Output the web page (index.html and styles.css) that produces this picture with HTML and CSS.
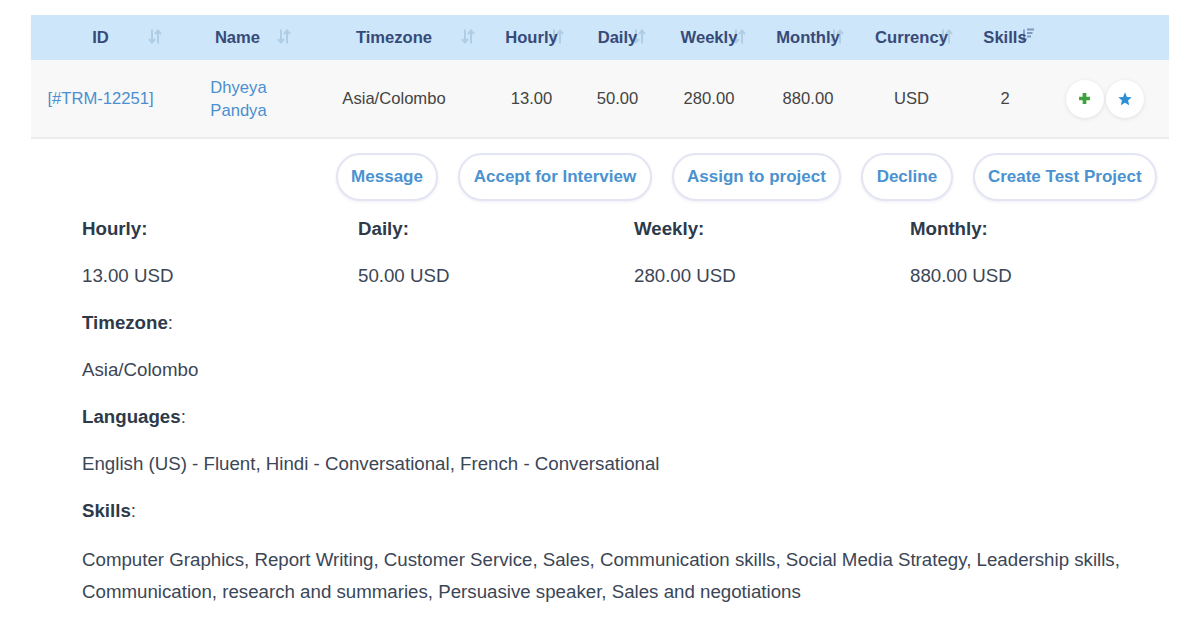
FILE: index.html
```html
<!DOCTYPE html>
<html lang="en">
<head>
    <meta charset="UTF-8">
    <title>Candidates</title>
    <link rel="stylesheet" href="styles.css">
</head>
<body>
    <div class="container">
        <table class="candidates">
            <colgroup>
                <col class="col-id">
                <col class="col-name">
                <col class="col-tz">
                <col class="col-hourly">
                <col class="col-daily">
                <col class="col-weekly">
                <col class="col-monthly">
                <col class="col-currency">
                <col class="col-skills">
                <col class="col-actions">
            </colgroup>
            <thead>
                <tr>
                    <th><span class="th-text">ID</span><svg class="sort" viewBox="0 0 14 16"><path d="M4 1v13M1 10.5l3 3.5 3-3.5M10 15V2M7 5.5l3-3.5 3 3.5"/></svg></th>
                    <th><span class="th-text">Name</span><svg class="sort" viewBox="0 0 14 16"><path d="M4 1v13M1 10.5l3 3.5 3-3.5M10 15V2M7 5.5l3-3.5 3 3.5"/></svg></th>
                    <th><span class="th-text">Timezone</span><svg class="sort" viewBox="0 0 14 16"><path d="M4 1v13M1 10.5l3 3.5 3-3.5M10 15V2M7 5.5l3-3.5 3 3.5"/></svg></th>
                    <th><span class="th-text">Hourly</span><svg class="sort" viewBox="0 0 14 16"><path d="M4 1v13M1 10.5l3 3.5 3-3.5M10 15V2M7 5.5l3-3.5 3 3.5"/></svg></th>
                    <th><span class="th-text">Daily</span><svg class="sort" viewBox="0 0 14 16"><path d="M4 1v13M1 10.5l3 3.5 3-3.5M10 15V2M7 5.5l3-3.5 3 3.5"/></svg></th>
                    <th><span class="th-text">Weekly</span><svg class="sort" viewBox="0 0 14 16"><path d="M4 1v13M1 10.5l3 3.5 3-3.5M10 15V2M7 5.5l3-3.5 3 3.5"/></svg></th>
                    <th><span class="th-text">Monthly</span><svg class="sort" viewBox="0 0 14 16"><path d="M4 1v13M1 10.5l3 3.5 3-3.5M10 15V2M7 5.5l3-3.5 3 3.5"/></svg></th>
                    <th><span class="th-text">Currency</span><svg class="sort" viewBox="0 0 14 16"><path d="M4 1v13M1 10.5l3 3.5 3-3.5M10 15V2M7 5.5l3-3.5 3 3.5"/></svg></th>
                    <th><span class="th-text">Skills</span><svg class="sort sort-active" viewBox="0 0 14 16"><path d="M3 2v12M0.5 11l2.5 3 2.5-3M6 2h7M6 5.5h5.5M6 9h4"/></svg></th>
                    <th></th>
                </tr>
            </thead>
            <tbody>
                <tr>
                    <td><a class="link" href="#">[#TRM-12251]</a></td>
                    <td><a class="link name-link" href="#">Dhyeya Pandya</a></td>
                    <td>Asia/Colombo</td>
                    <td>13.00</td>
                    <td>50.00</td>
                    <td>280.00</td>
                    <td>880.00</td>
                    <td>USD</td>
                    <td>2</td>
                    <td>
                        <div class="row-actions">
                            <button class="circle-btn add-btn" title="Add">
                                <svg viewBox="0 0 12 12"><path d="M6 1v10M1 6h10"/></svg>
                            </button>
                            <button class="circle-btn star-btn" title="Favourite">
                                <svg viewBox="0 0 24 24"><path d="M12 2l2.9 6.9 7.1.6-5.4 4.7 1.7 7.3L12 17.6l-6.3 3.9 1.7-7.3L2 9.5l7.1-.6z"/></svg>
                            </button>
                        </div>
                    </td>
                </tr>
            </tbody>
        </table>

        <div class="button-bar">
            <button class="pill">Message</button>
            <button class="pill">Accept for Interview</button>
            <button class="pill">Assign to project</button>
            <button class="pill">Decline</button>
            <button class="pill">Create Test Project</button>
        </div>

        <div class="details">
            <div class="rates">
                <div>
                    <p class="label"><strong>Hourly:</strong></p>
                    <p class="value">13.00 USD</p>
                </div>
                <div>
                    <p class="label"><strong>Daily:</strong></p>
                    <p class="value">50.00 USD</p>
                </div>
                <div>
                    <p class="label"><strong>Weekly:</strong></p>
                    <p class="value">280.00 USD</p>
                </div>
                <div>
                    <p class="label"><strong>Monthly:</strong></p>
                    <p class="value">880.00 USD</p>
                </div>
            </div>

            <p class="label"><strong>Timezone</strong>:</p>
            <p class="value">Asia/Colombo</p>

            <p class="label"><strong>Languages</strong>:</p>
            <p class="value">English (US) - Fluent, Hindi - Conversational, French - Conversational</p>

            <p class="label"><strong>Skills</strong>:</p>
            <p class="value skills-list">Computer Graphics, Report Writing, Customer Service, Sales, Communication skills, Social Media Strategy, Leadership skills, Communication, research and summaries, Persuasive speaker, Sales and negotiations</p>
        </div>
    </div>
</body>
</html>
```

FILE: styles.css
```css
body {
    font-family: 'Liberation Sans', Arial, Helvetica, sans-serif;
    color: #444;
    background-color: #fff;
    margin: 0;
    padding: 15px 31px 0;
}

.container {
    width: 1138px;
}

/* table */
.candidates {
    width: 1138px;
    border-collapse: collapse;
    table-layout: fixed;
}

.col-id { width: 139px; }
.col-name { width: 135px; }
.col-tz { width: 178px; }
.col-hourly { width: 97px; }
.col-daily { width: 75px; }
.col-weekly { width: 108px; }
.col-monthly { width: 90px; }
.col-currency { width: 117px; }
.col-skills { width: 70px; }
.col-actions { width: 129px; }

.candidates thead tr {
    background-color: #cde6f9;
    box-shadow: 0 2px 3px rgba(0, 0, 0, 0.05);
}

.candidates th {
    position: relative;
    height: 45px;
    padding: 0;
    font-size: 16.6px;
    font-weight: bold;
    color: #374a78;
    text-align: center;
}

.th-text {
    position: relative;
    z-index: 1;
}

.sort {
    position: absolute;
    top: 13px;
    right: 8px;
    width: 14px;
    height: 17px;
    fill: none;
    stroke: #b0cde6;
    stroke-width: 2;
}

.candidates th:nth-child(2) .sort { right: 14px; }
.candidates th:nth-child(4) .sort { right: 16px; }
.candidates th:nth-child(5) .sort { right: 9px; }
.candidates th:nth-child(6) .sort { right: 17px; }
.candidates th:nth-child(7) .sort { right: 9px; }
.candidates th:nth-child(8) .sort { right: 17px; }

.candidates th:nth-child(9) .sort {
    right: 5px;
    top: 12px;
    stroke: #8097c4;
    stroke-width: 1.8;
}

.candidates td {
    height: 77px;
    padding: 0 6px;
    background-color: #f8f8f8;
    border-bottom: 2px solid #ececec;
    font-size: 16.6px;
    line-height: 23px;
    color: #444;
    text-align: center;
}

.link {
    color: #4a8fcf;
    text-decoration: none;
}

.name-link {
    display: inline-block;
    width: min-content;
    text-align: left;
    padding-left: 2px;
}

.row-actions {
    display: flex;
    justify-content: center;
    gap: 2px;
}

.circle-btn {
    width: 38px;
    height: 38px;
    border: none;
    border-radius: 50%;
    background-color: #fff;
    box-shadow: 0 1px 4px rgba(0, 0, 0, 0.1);
    display: flex;
    align-items: center;
    justify-content: center;
    padding: 0;
}

.add-btn svg {
    width: 13px;
    height: 13px;
    stroke: #3ea23c;
    stroke-width: 3.4;
    fill: none;
}

.star-btn svg {
    width: 16px;
    height: 16px;
    fill: #2d8fd5;
}

/* action buttons */
.button-bar {
    display: flex;
    justify-content: flex-end;
    gap: 20px;
    margin-top: 14px;
    padding-right: 12px;
}

.pill {
    height: 48px;
    padding: 0 13.4px;
    border: 2px solid #e3e5f3;
    border-radius: 24px;
    background-color: #fff;
    box-shadow: 0 1px 3px rgba(90, 90, 170, 0.1);
    font-family: inherit;
    font-size: 17px;
    font-weight: bold;
    color: #4b92d0;
}

/* details */
.details {
    padding: 12px 0 0 51px;
    width: 1104px;
    font-size: 18.7px;
    color: #3b4656;
}

.rates {
    display: grid;
    grid-template-columns: repeat(4, 276px);
}

.details p {
    margin: 0 0 15px;
    line-height: 32px;
}

.details .skills-list {
    margin-top: 17px;
}

.label strong {
    color: #2d3a4a;
}
```
